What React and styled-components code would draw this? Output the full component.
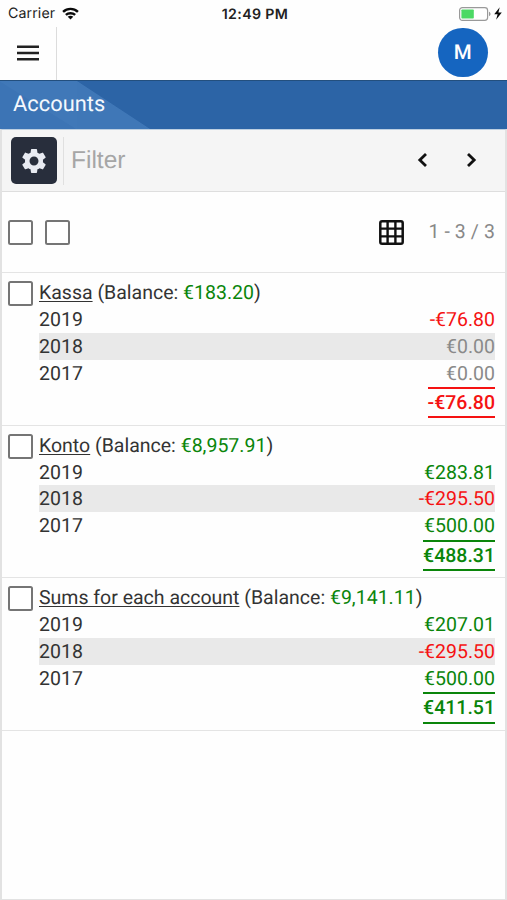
import React from "react";
import styled, { createGlobalStyle, css } from "styled-components";

const GlobalStyle = createGlobalStyle`
  * { box-sizing: border-box; }
  body { margin: 0; background: #fff; }
`;

const TONES = { positive: "#0a850a", negative: "#f51212", neutral: "#8a8a8a" };

const Screen = styled.div`
  display: flex;
  flex-direction: column;
  width: 507px;
  height: 900px;
  overflow: hidden;
  background: #fefefe;
  color: #333;
  font-family: Roboto, sans-serif;
  font-size: 19.5px;
  text-rendering: geometricPrecision;
`;

const StatusBar = styled.div`
  display: grid;
  grid-template-columns: 1fr auto 1fr;
  align-items: center;
  flex: none;
  height: 27px;
  padding: 0 5px 0 8px;
  color: #222;
  font-family: Inter, sans-serif;
`;

const Carrier = styled.div`
  display: flex;
  align-items: center;
  gap: 7px;
  font-size: 14.2px;
  letter-spacing: 0.1px;
`;

const Clock = styled.div`
  padding-top: 1px;
  font-weight: 600;
  font-size: 14.2px;
  letter-spacing: 0.35px;
`;

const Power = styled.div`
  display: flex;
  justify-content: flex-end;
  align-items: center;
  gap: 3px;
`;

const Header = styled.header`
  display: flex;
  align-items: center;
  justify-content: space-between;
  flex: none;
  height: 53px;
  padding: 0 19.5px 2px 0;
`;

const MenuButton = styled.button`
  display: flex;
  align-items: center;
  align-self: flex-start;
  width: 57px;
  height: 53px;
  padding: 0 0 1px 17px;
  border: 0;
  border-right: 1px solid #dcdcdc;
  background: none;
`;

const Avatar = styled.div`
  display: grid;
  place-items: center;
  width: 49.5px;
  height: 49.5px;
  border-radius: 50%;
  background: #1565c0;
  color: #fff;
  font-size: 20.5px;
  font-weight: 500;
`;

const TitleBar = styled.h1`
  flex: none;
  height: 49px;
  margin: 0;
  padding: 0 13px;
  border-top: 1px solid #234f7e;
  background:
    linear-gradient(to bottom left, #4078b8 50%, #3c74b5 51%) 0 0 / 77px 48px no-repeat,
    linear-gradient(to bottom left, transparent 49.5%, #3f77b7 50.5%) 77px 0 / 73px 48px no-repeat,
    #2c64a6;
  color: #f4f8fd;
  font-size: 21.8px;
  font-weight: 400;
  line-height: 48px;
  letter-spacing: 0.05px;
`;

const Panel = styled.main`
  flex: 1;
  min-height: 0;
  border: solid #e2e2e2;
  border-width: 1px 2px;
  border-top-color: #bdcfe1;
`;

const Toolbar = styled.div`
  display: flex;
  align-items: center;
  height: 62px;
  padding: 0 22px 0 9px;
  border-bottom: 1px solid #dedede;
  background: #f5f5f5;
`;

const SettingsButton = styled.button`
  display: grid;
  place-items: center;
  width: 46px;
  height: 47px;
  padding: 0;
  border: 0;
  border-radius: 5px;
  background: #282e3c;
`;

const FilterInput = styled.input`
  flex: 1;
  min-width: 0;
  height: 48px;
  margin-left: 6px;
  padding: 0 0 0 7px;
  border: 0;
  border-left: 1px solid #e0e0e0;
  background: none;
  font-family: "Liberation Sans", sans-serif;
  font-size: 24.5px;
  text-rendering: geometricPrecision;
  &::placeholder { color: #a6a6a6; opacity: 1; }
`;

const Pager = styled.div`
  display: flex;
  gap: 25px;
`;

const PagerButton = styled.button`
  display: flex;
  padding: 0 0 2px;
  border: 0;
  background: none;
`;

const SelectionRow = styled.div`
  display: flex;
  align-items: center;
  height: 81px;
  padding: 0 10px 0 6px;
  border-bottom: 1px solid #e4e4e4;
`;

const Checkbox = styled.input.attrs({ type: "checkbox" })`
  appearance: none;
  flex: none;
  width: 25px;
  height: 25px;
  margin: 0;
  border: 2px solid #757575;
  border-radius: 2.5px;
  background: #fff;
`;

const CheckboxPair = styled.div`
  display: flex;
  flex: 1;
  gap: 12px;
`;

const Range = styled.span`
  margin-left: 24px;
  padding-bottom: 2px;
  color: #888;
  letter-spacing: 0.1px;
`;

const Record = styled.section`
  display: flex;
  gap: 6px;
  height: 152.66px;
  padding: 6px 10px 0 6px;
  border-bottom: 1px solid #e4e4e4;
  & > ${Checkbox} { margin-top: 2px; }
`;

const RecordBody = styled.div`
  flex: 1;
`;

const line = css`
  height: 26.85px;
  line-height: 28px;
  white-space: nowrap;
`;

const RecordTitle = styled.div`
  ${line}
`;

const AccountLink = styled.a`
  text-decoration: underline;
  text-decoration-thickness: 1.3px;
  text-underline-offset: 2px;
  text-decoration-skip-ink: none;
`;

const YearRow = styled.div`
  ${line}
  display: flex;
  justify-content: space-between;
  background: ${(p) => (p.$shaded ? "#e9e9e9" : "transparent")};
`;

const Amount = styled.span`
  color: ${(p) => TONES[p.$tone]};
`;

const Total = styled.div`
  width: fit-content;
  height: 31.4px;
  margin-top: 0.5px;
  margin-left: auto;
  border: solid ${(p) => TONES[p.$tone]};
  border-width: 2px 0;
  color: ${(p) => TONES[p.$tone]};
  font-weight: 500;
  line-height: 28px;
`;

const ACCOUNTS = [
  {
    name: "Kassa",
    balance: "€183.20",
    years: [["2019", "-€76.80", "negative"], ["2018", "€0.00", "neutral"], ["2017", "€0.00", "neutral"]],
    total: ["-€76.80", "negative"],
  },
  {
    name: "Konto",
    balance: "€8,957.91",
    years: [["2019", "€283.81", "positive"], ["2018", "-€295.50", "negative"], ["2017", "€500.00", "positive"]],
    total: ["€488.31", "positive"],
  },
  {
    name: "Sums for each account",
    balance: "€9,141.11",
    years: [["2019", "€207.01", "positive"], ["2018", "-€295.50", "negative"], ["2017", "€500.00", "positive"]],
    total: ["€411.51", "positive"],
  },
];

const WifiIcon = () => (
  <svg width="17" height="13" viewBox="0 0 18 14" fill="none" stroke="#0a0a0a" strokeWidth="2.6">
    <path d="M1 5.2C5.6.9 12.4.9 17 5.2" />
    <path d="M4 8.6C6.8 6 11.2 6 14 8.6" />
    <path d="M9 13.4 6 10.6C7.6 9.2 10.4 9.2 12 10.6Z" fill="#0a0a0a" stroke="none" />
  </svg>
);

const BatteryIcon = () => (
  <svg width="32" height="14" viewBox="0 0 32 14">
    <rect x=".6" y=".6" width="28" height="12.8" rx="2.8" fill="#fff" stroke="#999" strokeWidth="1.2" />
    <rect x="2.4" y="2.4" width="12.4" height="9.2" rx=".8" fill="#4cd964" />
    <path d="M30 4.8C32 5.5 32 8.5 30 9.2Z" fill="#999" />
  </svg>
);

const BoltIcon = () => (
  <svg width="8" height="13" viewBox="0 0 8 13">
    <path d="M5.7.3.2 7.3H3.6L2.1 12.7 7.8 5.4H4.4Z" fill="#0a0a0a" />
  </svg>
);

const MenuIcon = () => (
  <svg width="22" height="16" viewBox="0 0 22 16" fill="#222">
    <path d="M0 .5H22.2V3H0ZM0 6.7H22.2V9.2H0ZM0 12.9H22.2V15.4H0Z" />
  </svg>
);

const GearIcon = () => (
  <svg width="30" height="30" viewBox="0 0 24 24" fill="#e8ebf2">
    <path d="M19.14 12.94c.04-.3.06-.61.06-.94 0-.32-.02-.64-.07-.94l2.03-1.58a.49.49 0 0 0 .12-.61l-1.92-3.32a.488.488 0 0 0-.59-.22l-2.39.96c-.5-.38-1.03-.7-1.62-.94l-.36-2.54a.484.484 0 0 0-.48-.41h-3.84c-.24 0-.43.17-.47.41l-.36 2.54c-.59.24-1.13.57-1.62.94l-2.39-.96c-.22-.08-.47 0-.59.22L2.74 8.87c-.12.21-.08.47.12.61l2.03 1.58c-.05.3-.09.63-.09.94s.02.64.07.94l-2.03 1.58a.49.49 0 0 0-.12.61l1.92 3.32c.12.22.37.29.59.22l2.39-.96c.5.38 1.03.7 1.62.94l.36 2.54c.05.24.24.41.48.41h3.84c.24 0 .44-.17.47-.41l.36-2.54c.59-.24 1.13-.56 1.62-.94l2.39.96c.22.08.47 0 .59-.22l1.92-3.32c.12-.22.07-.47-.12-.61zM12 15.6c-1.98 0-3.6-1.62-3.6-3.6s1.62-3.6 3.6-3.6 3.6 1.62 3.6 3.6-1.62 3.6-3.6 3.6z" />
  </svg>
);

const ChevronIcon = ({ d }) => (
  <svg width="24" height="24" viewBox="0 0 24 24" fill="none" stroke="#111" strokeWidth="2.8">
    <path d={d} />
  </svg>
);

const GridIcon = () => (
  <svg width="25" height="25" viewBox="0 0 25 25" fill="none" stroke="#111">
    <rect x="1.3" y="1.3" width="22.4" height="22.4" rx="1.8" strokeWidth="2.5" />
    <path d="M8.6 1V24M16.4 1V24M1 8.6H24M1 16.4H24" strokeWidth="2.4" />
  </svg>
);

export default function App() {
  return (
    <Screen>
      <GlobalStyle />
      <StatusBar>
        <Carrier>Carrier <WifiIcon /></Carrier>
        <Clock>12:49 PM</Clock>
        <Power><BatteryIcon /><BoltIcon /></Power>
      </StatusBar>
      <Header>
        <MenuButton aria-label="Menu"><MenuIcon /></MenuButton>
        <Avatar>M</Avatar>
      </Header>
      <TitleBar>Accounts</TitleBar>
      <Panel>
        <Toolbar>
          <SettingsButton aria-label="Settings"><GearIcon /></SettingsButton>
          <FilterInput placeholder="Filter" />
          <Pager>
            <PagerButton aria-label="Previous"><ChevronIcon d="M16 5.9 9.8 12 16 18.1" /></PagerButton>
            <PagerButton aria-label="Next"><ChevronIcon d="M9 5.9 15.2 12 9 18.1" /></PagerButton>
          </Pager>
        </Toolbar>
        <SelectionRow>
          <CheckboxPair><Checkbox /><Checkbox /></CheckboxPair>
          <GridIcon />
          <Range>1 - 3 / 3</Range>
        </SelectionRow>
        {ACCOUNTS.map(({ name, balance, years, total }) => (
          <Record key={name}>
            <Checkbox />
            <RecordBody>
              <RecordTitle>
                <AccountLink>{name}</AccountLink> (Balance: <Amount $tone="positive">{balance}</Amount>)
              </RecordTitle>
              {years.map(([year, amount, tone], i) => (
                <YearRow key={year} $shaded={i % 2 === 1}>
                  <span>{year}</span>
                  <Amount $tone={tone}>{amount}</Amount>
                </YearRow>
              ))}
              <Total $tone={total[1]}>{total[0]}</Total>
            </RecordBody>
          </Record>
        ))}
      </Panel>
    </Screen>
  );
}
